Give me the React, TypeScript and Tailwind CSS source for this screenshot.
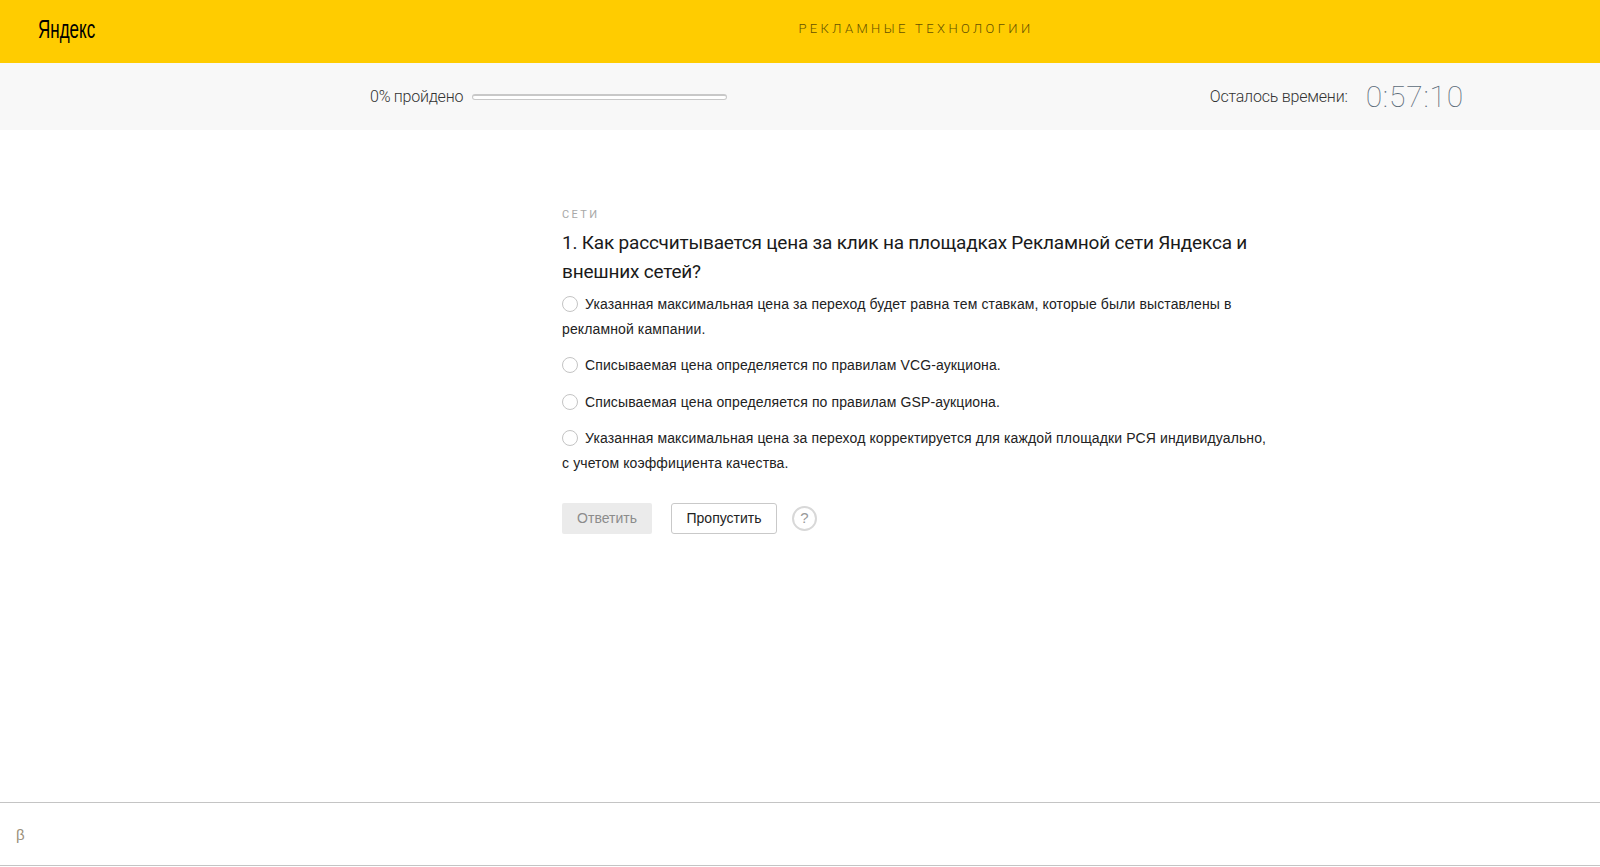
const options = [
  "Указанная максимальная цена за переход будет равна тем ставкам, которые были выставлены в рекламной кампании.",
  "Списываемая цена определяется по правилам VCG-аукциона.",
  "Списываемая цена определяется по правилам GSP-аукциона.",
  "Указанная максимальная цена за переход корректируется для каждой площадки РСЯ индивидуально, с учетом коэффициента качества.",
];

const sans = "font-['Roboto',sans-serif]";
const arial = "font-['Liberation_Sans',sans-serif]";

export default function App() {
  return (
    <div className={`flex h-[867px] flex-col overflow-hidden bg-white ${sans}`}>
      <header className="relative flex h-[63px] shrink-0 items-center justify-center bg-[#ffcc00] pb-[6px]">
        <span className={`absolute left-[38px] top-[12px] origin-left scale-x-[0.68] text-[25px] leading-[34px] text-black ${arial}`}>
          Яндекс
        </span>
        <span className="pl-[232px] text-[13px] font-light tracking-[3.4px] text-[#665200]">
          РЕКЛАМНЫЕ ТЕХНОЛОГИИ
        </span>
      </header>

      <div className="flex h-[67px] shrink-0 items-center bg-[#f8f8f8] pl-[370px] pr-[136px] text-[#333]">
        <span className="text-[16px] font-light tracking-[-0.25px]">0% пройдено</span>
        <div className="ml-[9px] h-[6px] w-[255px] rounded-[3px] border border-[#c8c8c8] border-t-2 bg-white" />
        <span className="ml-auto text-[16px] font-light tracking-[-0.2px]">Осталось времени:</span>
        <span className="ml-[18px] text-[30px] font-thin tracking-[0.8px] text-[#5b6b78]">0:57:10</span>
      </div>

      <main className="flex-1 pl-[562px] pt-[78px]">
        <div className="w-[708px]">
          <div className="text-[11px] leading-[14px] tracking-[2.4px] text-[#a8a8a8]">СЕТИ</div>
          <h1 className="mt-[6px] text-[19px] font-normal leading-[29px] tracking-[-0.2px] text-[#1a1a1a]">
            1. Как рассчитывается цена за клик на площадках Рекламной сети Яндекса и внешних сетей?
          </h1>
          <div className={`mt-[6px] flex flex-col gap-[11.4px] text-[14px] leading-[25px] tracking-[0.12px] text-[#222] ${arial}`}>
            {options.map((text) => (
              <div key={text}>
                <span className="mr-[7px] inline-block h-[16px] w-[16px] rounded-full border border-[#c4c4c4] bg-white align-[-3px]" />
                {text}
              </div>
            ))}
          </div>
          <div className={`mt-[27px] flex items-center text-[14px] ${arial}`}>
            <button className="h-[31px] w-[90px] rounded-[2px] bg-[#ebebeb] text-[#8c8c8c]">Ответить</button>
            <button className="ml-[19px] h-[31px] w-[106px] rounded-[3px] border border-[#c9c9c9] bg-white text-[#222]">Пропустить</button>
            <span className="ml-[15px] flex h-[25px] w-[25px] items-center justify-center rounded-full border-2 border-[#d8d8d8] text-[15px] text-[#999]">?</span>
          </div>
        </div>
      </main>

      <footer className="mb-[1px] flex h-[64px] shrink-0 items-center border-y border-[#c4c4c4] bg-white pl-[16px] pt-[2px]">
        <span className={`text-[15px] text-[#9a8f7a] ${arial}`}>β</span>
      </footer>
    </div>
  );
}
